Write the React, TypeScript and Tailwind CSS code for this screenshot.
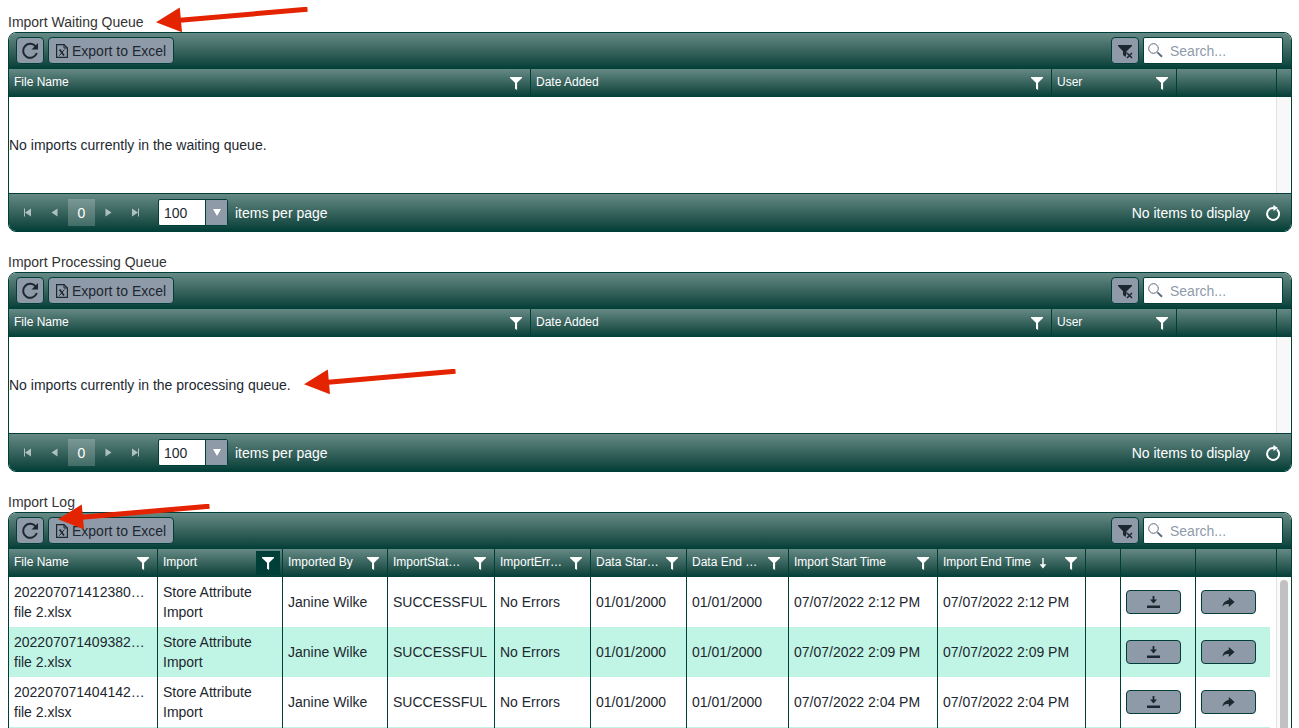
import React from "react";

type Column = {
  title?: string;
  width?: number;
  filter?: boolean;
  filterActive?: boolean;
  sorted?: boolean;
};

type ImportLogEntry = {
  fileName: string[];
  start: string;
  end: string;
};

const queueColumns: Column[] = [
  { title: "File Name", filter: true },
  { title: "Date Added", filter: true },
  { title: "User", width: 125, filter: true },
  { width: 100 },
];

const logColumns: Column[] = [
  { title: "File Name", filter: true },
  { title: "Import", width: 125, filter: true, filterActive: true },
  { title: "Imported By", width: 105, filter: true },
  { title: "ImportStat…", width: 107, filter: true },
  { title: "ImportErr…", width: 96, filter: true },
  { title: "Data Star…", width: 96, filter: true },
  { title: "Data End …", width: 102, filter: true },
  { title: "Import Start Time", width: 149, filter: true },
  { title: "Import End Time", width: 148, filter: true, sorted: true },
  { width: 35 },
  { width: 75 },
  { width: 75 },
];

const logEntries: ImportLogEntry[] = [
  {
    fileName: ["202207071412380…", "file 2.xlsx"],
    start: "07/07/2022 2:12 PM",
    end: "07/07/2022 2:12 PM",
  },
  {
    fileName: ["202207071409382…", "file 2.xlsx"],
    start: "07/07/2022 2:09 PM",
    end: "07/07/2022 2:09 PM",
  },
  {
    fileName: ["202207071404142…", "file 2.xlsx"],
    start: "07/07/2022 2:04 PM",
    end: "07/07/2022 2:04 PM",
  },
];

function FunnelIcon() {
  return (
    <svg width="12" height="13" viewBox="0 0 12 13" fill="currentColor">
      <path d="M0 0H12V1L7.1 5.8V13L5 11.8V5.8L0 1Z" />
    </svg>
  );
}

function ClearFilterIcon() {
  return (
    <svg width="16" height="16" viewBox="0 0 16 16">
      <path d="M1 2H15V3L9.6 8.2V10L8.6 14L6 12V8.2L1 3Z" fill="currentColor" />
      <path
        d="M10 10L15 15M15 10L10 15"
        stroke="currentColor"
        strokeWidth="1.5"
      />
    </svg>
  );
}

function RefreshIcon() {
  return (
    <svg width="18" height="18" viewBox="0 0 18 18" fill="none">
      <path
        d="M15 5A7 7 0 1 0 15.8 11"
        stroke="currentColor"
        strokeWidth="2"
      />
      <path d="M17 1V7.5H10.5Z" fill="currentColor" />
    </svg>
  );
}

function ExcelIcon() {
  return (
    <svg width="12" height="14" viewBox="0 0 12 14" fill="none">
      <path
        d="M.6 .6H8L11.4 4V13.4H.6Z"
        stroke="currentColor"
        strokeWidth="1.2"
      />
      <path d="M8 .6V4H11.4" stroke="currentColor" />
      <path d="M3.6 5.5L8 11.6" stroke="currentColor" strokeWidth="1.7" />
      <path d="M8.4 5.5L3.4 11.6" stroke="currentColor" strokeWidth="1" />
    </svg>
  );
}

function SearchIcon() {
  return (
    <svg width="15" height="15" viewBox="0 0 15 15" fill="none">
      <circle cx="5.5" cy="5.5" r="4.8" stroke="currentColor" />
      <path d="M9.4 9.4L14 13.8" stroke="currentColor" strokeWidth="2" />
    </svg>
  );
}

function ReloadIcon() {
  return (
    <svg width="14" height="16" viewBox="0 0 14 16" fill="none">
      <path
        d="M11 4.4A6 6 0 1 1 7.8 3"
        stroke="currentColor"
        strokeWidth="2"
      />
      <path d="M7.4 0L12 3L7.4 6Z" fill="currentColor" />
    </svg>
  );
}

function SortDownIcon() {
  return (
    <svg width="8" height="12" viewBox="0 0 8 12" fill="none">
      <path d="M4 1V9" stroke="currentColor" strokeWidth="1.4" />
      <path d="M.6 7.2H7.4L4 11.4Z" fill="currentColor" />
    </svg>
  );
}

function DownloadIcon() {
  return (
    <svg width="13" height="13" viewBox="0 0 13 13" fill="currentColor">
      <path d="M5.6 0H7.4V3.6H10L6.5 7.4L3 3.6H5.6ZM0 9.6H13V12H0Z" />
    </svg>
  );
}

function ShareIcon() {
  return (
    <svg width="13" height="12" viewBox="0 0 13 12" fill="currentColor">
      <path d="M6.8 1L12.6 6L6.8 11V8C4 7.8 2 8.6 .4 10.8C.8 7 3 4.4 6.8 4Z" />
    </svg>
  );
}

function PagerIcon({ d }: { d: string }) {
  return (
    <svg width="9" height="9" viewBox="0 0 9 9" fill="currentColor">
      <path d={d} />
    </svg>
  );
}

function Arrow({ className }: { className: string }) {
  return (
    <svg
      className={`pointer-events-none absolute z-10 ${className}`}
      width="154"
      height="26"
      viewBox="0 0 154 26"
    >
      <path d="M0 15.2L23.8 .4L26 25.2Z" fill="#e42300" />
      <path d="M24 13.2L151.5 2.2" stroke="#e42300" strokeWidth="5" />
    </svg>
  );
}

function Toolbar() {
  return (
    <div className="flex h-9 items-center gap-1 bg-linear-to-b from-[#668a86] to-[#003f38] pr-2 pb-px pl-[7px]">
      <button
        aria-label="Refresh"
        className="flex h-[27px] w-7 items-center justify-center rounded border border-[#003f38] bg-[#8f9aa9] text-[#1d272f]"
      >
        <RefreshIcon />
      </button>
      <button className="flex h-[27px] items-center gap-1 rounded border border-[#003f38] bg-[#8f9aa9] px-[7px] text-[#1d272f]">
        <ExcelIcon />
        Export to Excel
      </button>
      <button
        aria-label="Clear filters"
        className="ml-auto flex h-[27px] w-7 items-center justify-center rounded border border-[#003f38] bg-[#8f9aa9] text-[#1d272f]"
      >
        <ClearFilterIcon />
      </button>
      <label className="flex h-[27px] w-[140px] items-center gap-[7px] rounded-xs border border-[#003f38] bg-white pl-1 text-[#5d6b7b]">
        <SearchIcon />
        <input
          type="text"
          aria-label="Search"
          placeholder="Search..."
          className="min-w-0 flex-1 outline-none placeholder:text-[#8f9aa9]"
        />
      </label>
    </div>
  );
}

function HeaderCell({ column }: { column: Column }) {
  return (
    <th className="border-l border-[#003f38] bg-linear-to-b from-[#668a86] to-[#003f38] p-0 font-normal first:border-l-0">
      <div className="flex h-7 items-center pr-[2px] pl-[5px]">
        <span className="pb-[2px] whitespace-nowrap">{column.title}</span>
        {column.sorted && (
          <span className="ml-2">
            <SortDownIcon />
          </span>
        )}
        {column.filter && (
          <button
            aria-label={`Filter ${column.title}`}
            className={`ml-auto flex h-6 w-6 shrink-0 items-center justify-center ${
              column.filterActive ? "bg-[#003f38]" : ""
            }`}
          >
            <FunnelIcon />
          </button>
        )}
      </div>
    </th>
  );
}

function GridTable({
  columns,
  scrollColumns,
  children,
}: {
  columns: Column[];
  scrollColumns: number[];
  children: React.ReactNode;
}) {
  return (
    <table className="w-full table-fixed border-separate border-spacing-0 text-left">
      <colgroup>
        {columns.map((column, i) => (
          <col key={i} style={{ width: column.width }} />
        ))}
        {scrollColumns.map((width, i) => (
          <col key={i} style={{ width }} />
        ))}
      </colgroup>
      <thead className="text-xs text-white">
        <tr>
          {columns.slice(0, -1).map((column, i) => (
            <HeaderCell key={i} column={column} />
          ))}
          <th
            colSpan={scrollColumns.length}
            className="border-l border-[#003f38] bg-linear-to-b from-[#668a86] to-[#003f38]"
          ></th>
          <th className="border-l border-[#003f38] bg-linear-to-b from-[#668a86] to-[#003f38]"></th>
        </tr>
      </thead>
      <tbody>{children}</tbody>
    </table>
  );
}

function Pager() {
  return (
    <div className="flex h-[38px] items-center border-t border-[#003f38] bg-linear-to-b from-[#668a86] to-[#003f38] pr-[11px] pl-[5px] text-white">
      <button
        aria-label="First page"
        className="flex h-[27px] w-[27px] items-center justify-center opacity-60"
      >
        <PagerIcon d="M1 .5H2V8.5H1ZM8 .5V8.5L2 4.5Z" />
      </button>
      <button
        aria-label="Previous page"
        className="flex h-[27px] w-[27px] items-center justify-center opacity-60"
      >
        <PagerIcon d="M7.5 .5V8.5L1.5 4.5Z" />
      </button>
      <button className="h-[27px] w-[27px] bg-white/20">0</button>
      <button
        aria-label="Next page"
        className="flex h-[27px] w-[27px] items-center justify-center opacity-60"
      >
        <PagerIcon d="M1.5 .5V8.5L7.5 4.5Z" />
      </button>
      <button
        aria-label="Last page"
        className="flex h-[27px] w-[27px] items-center justify-center opacity-60"
      >
        <PagerIcon d="M7 .5H8V8.5H7ZM1 .5V8.5L7 4.5Z" />
      </button>
      <div className="relative ml-[9px]">
        <select
          aria-label="items per page"
          className="block h-[27px] w-[70px] appearance-none rounded-xs border border-[#003f38] bg-white pl-[5px] text-[#1d272f]"
        >
          <option>100</option>
        </select>
        <span className="pointer-events-none absolute inset-y-px right-px flex w-[22px] items-center justify-center border-l border-[#003f38] bg-[#8f9aa9]">
          <svg width="8" height="7" viewBox="0 0 8 7" fill="currentColor">
            <path d="M0 0H8L4 7Z" />
          </svg>
        </span>
      </div>
      <span className="ml-[7px]">items per page</span>
      <span className="ml-auto">No items to display</span>
      <button aria-label="Reload" className="ml-4">
        <ReloadIcon />
      </button>
    </div>
  );
}

function QueueGrid({ title, message }: { title: string; message: string }) {
  return (
    <section>
      <h2 className="leading-5 text-[#333]">{title}</h2>
      <div className="overflow-hidden rounded-lg border border-[#003f38]">
        <Toolbar />
        <GridTable columns={queueColumns} scrollColumns={[15]}>
          <tr>
            <td colSpan={4} className="h-24 p-0">
              {message}
            </td>
            <td className="border-l border-[#e2e2e2] bg-[#f8f8f8]"></td>
          </tr>
        </GridTable>
        <Pager />
      </div>
    </section>
  );
}

function LogRow({ entry, index }: { entry?: ImportLogEntry; index: number }) {
  const cells: React.ReactNode[] = entry
    ? [
        entry.fileName.map((line) => <div key={line}>{line}</div>),
        "Store Attribute Import",
        "Janine Wilke",
        "SUCCESSFUL",
        "No Errors",
        "01/01/2000",
        "01/01/2000",
        entry.start,
        entry.end,
        "",
        <button
          aria-label="Download"
          className="flex h-6 w-[55px] items-center justify-center rounded border border-[#003f38] bg-[#8f9aa9]"
        >
          <DownloadIcon />
        </button>,
        <button
          aria-label="Share"
          className="flex h-6 w-[55px] items-center justify-center rounded border border-[#003f38] bg-[#8f9aa9]"
        >
          <ShareIcon />
        </button>,
      ]
    : logColumns.map(() => "");

  return (
    <tr>
      {cells.map((cell, i) => (
        <td
          key={i}
          className={`h-[50px] border-l border-[#003f38] py-0 pr-0 pl-[5px] leading-5 first:border-l-0 ${
            index % 2 ? "bg-[#c0f5e5]" : ""
          } ${i === 1 ? "" : "whitespace-nowrap"}`}
        >
          {cell}
        </td>
      ))}
      <td></td>
      {index === 0 && (
        <td
          rowSpan={logEntries.length + 1}
          className="border-l border-[#e2e2e2] bg-[#fafafa] p-0 pt-[3px] align-top"
        >
          <div className="mx-auto h-48 w-2 rounded-full bg-[#c1c1c1]"></div>
        </td>
      )}
    </tr>
  );
}

export default function App() {
  return (
    <main className="relative flex h-screen flex-col gap-5 overflow-hidden bg-white pt-3 pr-[7px] pl-2 font-['Liberation_Sans',Arial,sans-serif] text-sm text-[#1d272f]">
      <QueueGrid
        title="Import Waiting Queue"
        message="No imports currently in the waiting queue."
      />
      <QueueGrid
        title="Import Processing Queue"
        message="No imports currently in the processing queue."
      />
      <section>
        <h2 className="leading-5 text-[#333]">Import Log</h2>
        <div className="overflow-hidden rounded-lg border border-[#003f38]">
          <Toolbar />
          <GridTable columns={logColumns} scrollColumns={[6, 15]}>
            {logEntries.map((entry, i) => (
              <LogRow key={entry.start} entry={entry} index={i} />
            ))}
            <LogRow index={logEntries.length} />
          </GridTable>
        </div>
      </section>
      <Arrow className="top-[7px] left-[156px]" />
      <Arrow className="top-[369px] left-[304px]" />
      <Arrow className="top-[504px] left-[58px]" />
    </main>
  );
}
